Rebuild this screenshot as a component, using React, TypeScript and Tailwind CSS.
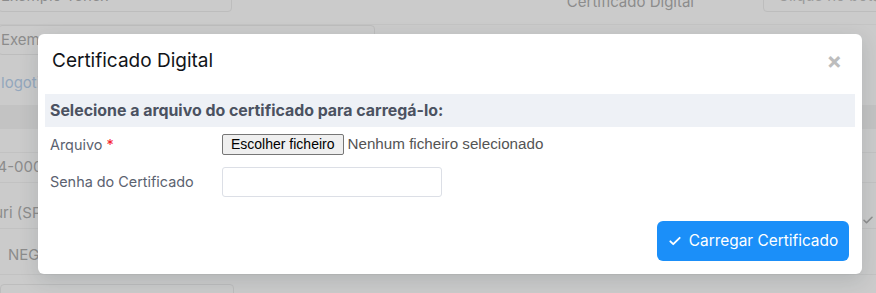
import React from "react";

function CheckIcon({ color = "white", size = 14 }: { color?: string; size?: number }) {
  return (
    <svg width={size} height={size} viewBox="0 0 24 24" fill="none" stroke={color} strokeWidth="3.2" strokeLinecap="round" strokeLinejoin="round">
      <path d="M4 12.5l5 5L20 6.5" />
    </svg>
  );
}

function Background() {
  return (
    <div className="absolute inset-0 bg-[#cbcbcb] text-[15px] text-[#8c8c8c] flex flex-col" style={{ fontFamily: "Inter, sans-serif" }}>
      {/* row 1 */}
      <div className="flex h-[12px] shrink-0">
        <div className="w-[234px] h-[30px] -mt-[18px] border border-[#bdbdbd] rounded-[4px] -ml-[2px] flex items-center pl-[2px] shrink-0">
          <span className="whitespace-nowrap -mt-[2px]">Exemplo Tenex</span>
        </div>
        <div className="w-[332px] shrink-0" />
        <div className="w-[130px] shrink-0 whitespace-nowrap text-right -mt-[9px]">Certificado Digital</div>
        <div className="w-[69px] shrink-0" />
        <div className="flex-1 h-[30px] -mt-[18px] border border-[#bdbdbd] rounded-[4px] text-[#9a9a9a] pl-[14px] flex items-center">
          <span className="whitespace-nowrap -mt-[2px]">Clique no botão</span>
        </div>
      </div>
      <div className="h-[13px] shrink-0 border-b border-[#c4c4c4]" />
      {/* row 2 */}
      <div className="w-[377px] h-[30px] shrink-0 border border-[#bdbdbd] rounded-[4px] -ml-[2px] flex items-center pl-[2px]">Exemplo</div>
      <div className="h-[18px] shrink-0" />
      <div className="h-[20px] shrink-0 flex items-center text-[#93a7bd] pl-[1px]">logotipo</div>
      <div className="h-[12px] shrink-0" />
      <div className="h-[24px] shrink-0 bg-[#c3c3c3]" />
      <div className="h-[24px] shrink-0 border-b border-[#c2c2c2]" />
      <div className="h-[30px] shrink-0 flex items-center border-b border-[#c2c2c2]">
        <span className="-ml-[12px]">04-000</span>
      </div>
      <div className="h-[46px] shrink-0 flex items-center justify-between border-b border-[#c2c2c2] pt-[16px]">
        <span className="-ml-[24px]">Bauri (SP)</span>
        <span className="mr-[2px] mt-[12px]"><CheckIcon color="#8f8f8f" size={12} /></span>
      </div>
      <div className="h-[46px] shrink-0 flex items-center border-b border-[#c2c2c2] pt-[8px] pl-[8px]">NEGRO</div>
      <div className="flex shrink-0 mt-[9px]">
        <div className="w-[234px] h-[30px] border border-[#bdbdbd] rounded-[4px]" />
      </div>
    </div>
  );
}

export default function App() {
  return (
    <div className="relative w-[876px] h-[293px] overflow-hidden" style={{ fontFamily: "Inter, 'Noto Sans', sans-serif" }}>
      <Background />
      <div className="absolute left-[38px] top-[34px] w-[824px] h-[240px] bg-white rounded-[6px] shadow-[0_6px_20px_rgba(20,40,50,0.14)] flex flex-col">
        <div className="flex items-center justify-between h-[52px] pl-[14px] pr-[20px] pt-[2px]">
          <span className="text-[19px] text-[#111418]">Certificado Digital</span>
          <span className="text-[#bdbdbd] text-[23px] font-bold leading-none">×</span>
        </div>
        <div className="mx-[7px] mt-[8px] h-[33px] bg-[#eef1f6] flex items-center pl-[5px]">
          <span className="text-[15.9px] font-bold text-[#4b5261]">Selecione a arquivo do certificado para carregá-lo:</span>
        </div>
        <div className="flex items-center mt-[7px] h-[21px] pl-[12px]">
          <div className="w-[172px] text-[14.4px] text-[#5b6270]">
            Arquivo <span className="text-[#f5222d]">*</span>
          </div>
          <div className="flex items-center" style={{ fontFamily: "'Liberation Sans', Arial, sans-serif" }}>
            <span className="h-[21px] px-[8px] border border-[#767676] rounded-[2px] bg-[#efefef] text-[14px] text-black flex items-center">Escolher ficheiro</span>
            <span className="ml-[4px] text-[15.2px] text-[#545454]">Nenhum ficheiro selecionado</span>
          </div>
        </div>
        <div className="flex items-center mt-[12px] pl-[12px]">
          <div className="w-[172px] text-[14.4px] text-[#5b6270]">Senha do Certificado</div>
          <div className="w-[220px] h-[30px] border border-[#dcdfe6] rounded-[3px]" />
        </div>
        <div className="flex justify-end mt-[24px] pr-[13px]">
          <button className="h-[40px] w-[192px] rounded-[6px] bg-[#1b8ff9] text-white text-[15.4px] flex items-center justify-center gap-[7px]">
            <CheckIcon />
            <span>Carregar Certificado</span>
          </button>
        </div>
      </div>
    </div>
  );
}
